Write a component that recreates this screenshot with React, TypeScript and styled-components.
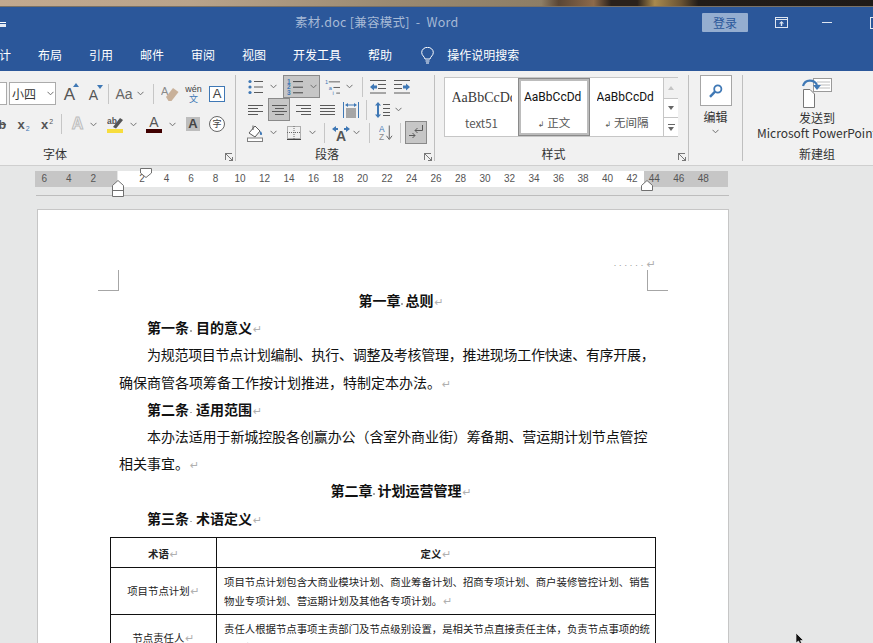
import styled, { createGlobalStyle } from 'styled-components';

const SANS = `"Noto Sans CJK SC", "Liberation Sans", sans-serif`;
const GREY = '#5a5a5a';
const BLUE = '#3f78b5';

const GlobalStyle = createGlobalStyle`
	html, body { margin: 0; padding: 0; background: #e6e7e7; }
	body { font-family: ${SANS}; }
`;

const Chev = ({ m = 0 }: { m?: number }) => (
	<ChevSvg $m={m} width="7" height="5" viewBox="0 0 7 5">
		<polyline points="0.5,0.8 3.5,3.8 6.5,0.8" fill="none" stroke="#707070" />
	</ChevSvg>
);

const HLines = ({ rows, w = 15, h = 14, color = GREY }: { rows: number[][]; w?: number; h?: number; color?: string }) => (
	<svg width={w} height={h} viewBox={`0 0 ${w} ${h}`}>
		{rows.map(([x1, x2, y], i) => (
			<line key={i} x1={x1} x2={x2} y1={y} y2={y} stroke={color} />
		))}
	</svg>
);

const BulletsIcon = () => (
	<svg width="15" height="16" viewBox="0 0 15 16">
		{[2.5, 8, 13.5].map((y) => (
			<g key={y}>
				<circle cx="2" cy={y} r="1.6" fill={BLUE} />
				<line x1="6" x2="15" y1={y} y2={y} stroke={GREY} />
			</g>
		))}
	</svg>
);

const NumberedIcon = () => (
	<svg width="16" height="18" viewBox="0 0 16 18">
		{[1, 2, 3].map((n) => (
			<g key={n}>
				<text x="0" y={n * 5.6} fontSize="6.5" fontWeight="700" fill={BLUE} fontFamily="Liberation Sans">
					{n}
				</text>
				<line x1="6" x2="16" y1={n * 5.6 - 2} y2={n * 5.6 - 2} stroke="#444" />
			</g>
		))}
	</svg>
);

const MultilevelIcon = () => (
	<svg width="16" height="18" viewBox="0 0 16 18">
		<text x="0" y="6" fontSize="6" fill={BLUE} fontFamily="Liberation Sans">1</text>
		<line x1="4" x2="16" y1="3.5" y2="3.5" stroke={GREY} />
		<text x="4" y="12" fontSize="6" fill={BLUE} fontFamily="Liberation Sans">a</text>
		<line x1="9" x2="16" y1="9.5" y2="9.5" stroke={GREY} />
		<text x="8" y="18" fontSize="6" fill={BLUE} fontFamily="Liberation Sans">i</text>
		<line x1="12" x2="16" y1="15.5" y2="15.5" stroke={GREY} />
	</svg>
);

const IndentIcon = ({ flip }: { flip?: boolean }) => (
	<svg width="16" height="14" viewBox="0 0 16 14">
		<g transform={flip ? 'translate(16,0) scale(-1,1)' : undefined}>
			<path d="M0 7 L4 3.5 V5.5 H7 V8.5 H4 V10.5 Z" fill={BLUE} />
			<line x1="0" x2="16" y1="0.5" y2="0.5" stroke={GREY} />
			<line x1="8" x2="16" y1="4.5" y2="4.5" stroke={GREY} />
			<line x1="8" x2="16" y1="8.5" y2="8.5" stroke={GREY} />
			<line x1="0" x2="16" y1="13" y2="13" stroke={GREY} />
		</g>
	</svg>
);

const DistributedIcon = () => (
	<svg width="16" height="16" viewBox="0 0 16 16">
		<line x1="0.5" x2="0.5" y1="0" y2="16" stroke={BLUE} />
		<line x1="15.5" x2="15.5" y1="0" y2="16" stroke={BLUE} />
		<path d="M2 3 L5 1 V2.5 H11 V1 L14 3 L11 5 V3.5 H5 V5 Z" fill={BLUE} />
		{[7, 9, 11, 13, 15].map((y) => (
			<line key={y} x1="3" x2="13" y1={y} y2={y} stroke={GREY} />
		))}
	</svg>
);

const LineSpacingIcon = () => (
	<svg width="15" height="16" viewBox="0 0 15 16">
		<path d="M3 0 L6 3.5 H4 V12.5 H6 L3 16 L0 12.5 H2 V3.5 H0 Z" fill={BLUE} />
		{[2.5, 6.5, 10.5, 13.5].map((y) => (
			<line key={y} x1="8" x2="15" y1={y} y2={y} stroke={GREY} />
		))}
	</svg>
);

const ShadingIcon = () => (
	<svg width="16" height="18" viewBox="0 0 16 18">
		<path d="M2 9 L8 2 L13 7 L8 13 Z" fill="#fff" stroke={GREY} />
		<path d="M6 1.5 V6" stroke={GREY} fill="none" />
		<path d="M13.5 7 C15.5 9 15.5 11 14 11 C12.5 11 12.5 9 13.5 7 Z" fill={BLUE} />
		<rect x="0.5" y="14" width="15" height="3.5" fill="#fff" stroke="#808080" />
	</svg>
);

const BordersIcon = () => (
	<svg width="14" height="14" viewBox="0 0 14 14">
		<g stroke="#6a6a6a" strokeDasharray="1 1" fill="none">
			<rect x="0.5" y="0.5" width="13" height="12" />
			<line x1="7" x2="7" y1="0" y2="13" />
			<line x1="0" x2="14" y1="6.5" y2="6.5" />
		</g>
		<line x1="0" x2="14" y1="13.5" y2="13.5" stroke="#444" />
	</svg>
);

const DirectionIcon = () => (
	<svg width="18" height="16" viewBox="0 0 18 16">
		<path d="M0 4 L4 1 V3 H6 V5 H4 V7 Z M18 4 L14 1 V3 H12 V5 H14 V7 Z" fill={BLUE} />
		<text x="9" y="15.5" textAnchor="middle" fontSize="14" fontWeight="700" fill="#555" fontFamily="Liberation Sans">
			A
		</text>
	</svg>
);

const SortIcon = () => (
	<svg width="15" height="17" viewBox="0 0 15 17">
		<text x="0" y="8" fontSize="9" fill={BLUE} fontFamily="Liberation Sans">A</text>
		<text x="0" y="17" fontSize="9" fill="#8a8a8a" fontFamily="Liberation Sans">Z</text>
		<line x1="11" x2="11" y1="1" y2="15" stroke={GREY} />
		<polyline points="8,12 11,16 14,12" fill="none" stroke={GREY} />
	</svg>
);

const MarksIcon = () => (
	<svg width="16" height="15" viewBox="0 0 16 15">
		<polyline points="14.5,0 14.5,5.5 7,5.5" fill="none" stroke={GREY} />
		<polyline points="9.5,3 7,5.5 9.5,8" fill="none" stroke={GREY} />
		<line x1="1" x2="7" y1="10.5" y2="10.5" stroke={GREY} />
		<polyline points="4.5,8 7,10.5 4.5,13" fill="none" stroke={GREY} />
	</svg>
);

const EraserIcon = () => (
	<svg width="18" height="17" viewBox="0 0 18 17">
		<text x="0" y="10" fontSize="11" fill="#8a8a8a" fontFamily="Liberation Sans">A</text>
		<path d="M5 12 L12 3 L17.5 7 L10.5 16 L7.5 16 Z" fill="#c9b19a" />
	</svg>
);

const PenIcon = () => (
	<svg width="16" height="17" viewBox="0 0 16 17">
		<text x="0" y="8" fontSize="8.5" fontWeight="700" fill="#555" fontFamily="Liberation Sans">ab</text>
		<path d="M6 11 L13 2 L16 4 L9 12.5 Z" fill="#555" />
		<rect x="0" y="13" width="16" height="4" fill="#f7dd3d" />
	</svg>
);

const SearchIcon = () => (
	<svg width="14" height="14" viewBox="0 0 14 14">
		<circle cx="8.8" cy="5" r="3.6" fill="#fff" stroke={BLUE} strokeWidth="1.8" />
		<line x1="6" x2="1" y1="7.6" y2="12.8" stroke={BLUE} strokeWidth="2.4" />
	</svg>
);

const SendIcon = () => (
	<svg width="30" height="30" viewBox="0 0 30 30">
		<rect x="11.5" y="0.5" width="18" height="13" fill="#fff" stroke="#9a9a9a" />
		{[4, 7, 10].map((y) => (
			<line key={y} x1="15" x2="28" y1={y} y2={y} stroke="#bdbdbd" />
		))}
		<path d="M1 8 C3 1 12 1 15 7" fill="none" stroke={BLUE} strokeWidth="2.2" />
		<path d="M11 7 H19 L15 12 Z" fill={BLUE} />
		<path d="M1.5 11.5 H8 L12.5 16 V29.5 H1.5 Z" fill="#fff" stroke="#777" />
	</svg>
);

const RibbonDisplayIcon = () => (
	<svg width="13" height="11" viewBox="0 0 13 11">
		<rect x="0.5" y="0.5" width="12" height="10" fill="none" stroke="#dfe6f1" />
		<line x1="0" x2="13" y1="2.5" y2="2.5" stroke="#dfe6f1" />
		<path d="M6.5 4 L9 6.5 H7.2 V9 H5.8 V6.5 H4 Z" fill="#dfe6f1" />
	</svg>
);

const ChapterTitle = ({ a, b }: { a: string; b: string }) => (
	<Chapter>
		{a}
		<Dot $w={5} />
		{b}
		<Mark>↵</Mark>
	</Chapter>
);

const Article = ({ a, b }: { a: string; b: string }) => (
	<ArticleLine>
		{a}
		<Dot $w={7} />
		{b}
		<Mark>↵</Mark>
	</ArticleLine>
);

const App = () => {
	const white: number[] = [];
	for (let n = 2; n <= 42; n += 2) white.push(n);

	return (
		<Root>
			<GlobalStyle />
			<TopStrip />
			<TitleBar>
				<QatMark />
				<DocTitle>素材.doc [兼容模式]&nbsp; -&nbsp; Word</DocTitle>
				<LoginButton>登录</LoginButton>
				<WinButton $m={27}>
					<RibbonDisplayIcon />
				</WinButton>
				<MinLine />
				<MaxBox />
			</TitleBar>
			<TabBar>
				<Tab $first>设计</Tab>
				<Tab>布局</Tab>
				<Tab>引用</Tab>
				<Tab>邮件</Tab>
				<Tab>审阅</Tab>
				<Tab>视图</Tab>
				<Tab>开发工具</Tab>
				<Tab>帮助</Tab>
				<Bulb width="13" height="17" viewBox="0 0 13 17">
					<path d="M4 12 C3.5 9.5 0.7 8.5 0.7 5.5 A5.8 5.2 0 0 1 12.3 5.5 C12.3 8.5 9.5 9.5 9 12 Z" fill="none" stroke="#fff" />
					<line x1="4.5" x2="8.5" y1="14" y2="14" stroke="#fff" />
					<line x1="5" x2="8" y1="16" y2="16" stroke="#fff" />
				</Bulb>
				<SearchHint>操作说明搜索</SearchHint>
			</TabBar>
			<Ribbon>
				<Group $w={345}>
					<Rows $top={7} $gap={8} $pad={109}>
						<ToolRow $h={23}>
							<FontBox $m={-20} $w={27} />
							<SizeBox>
								小四
								<Chev m={11} />
							</SizeBox>
							<Tool $w={15} $m={8}>
								<BigA $size={17}>A</BigA>
								<Caret $up />
							</Tool>
							<Tool $w={15} $m={9}>
								<BigA $size={14}>A</BigA>
								<Caret />
							</Tool>
							<Sep $m={5} />
							<Tool $w={16} $m={7}>
								<CaseText>Aa</CaseText>
							</Tool>
							<Chev m={5} />
							<Sep $m={9} />
							<Tool $w={18} $m={7}>
								<EraserIcon />
							</Tool>
							<Tool $w={17} $m={6}>
								<WenStack>
									<span>wén</span>
									<b>文</b>
								</WenStack>
							</Tool>
							<Tool $w={16} $m={7}>
								<BoxedA>A</BoxedA>
							</Tool>
						</ToolRow>
						<ToolRow $h={22}>
							<Tool $w={17} $m={-10}>
								<ScriptText $strike>ab</ScriptText>
							</Tool>
							<Tool $w={15} $m={9}>
								<ScriptText>x</ScriptText>
								<ScriptIndex>2</ScriptIndex>
							</Tool>
							<Tool $w={14} $m={9}>
								<ScriptText>x</ScriptText>
								<ScriptIndex $up>2</ScriptIndex>
							</Tool>
							<Sep $m={7} />
							<Tool $w={15} $m={8}>
								<GhostA>A</GhostA>
							</Tool>
							<Chev m={5} />
							<Tool $w={16} $m={10}>
								<PenIcon />
							</Tool>
							<Chev m={7} />
							<Tool $w={16} $m={9}>
								<ColorA>A</ColorA>
							</Tool>
							<Chev m={7} />
							<Tool $w={14} $m={10}>
								<ShadedA>A</ShadedA>
							</Tool>
							<Tool $w={16} $m={9}>
								<CircleChar>字</CircleChar>
							</Tool>
						</ToolRow>
					</Rows>
					<GroupLabel $launcher>字体</GroupLabel>
					<Launcher />
				</Group>
				<Group $w={199}>
					<Rows>
						<ToolRow $h={23}>
							<Tool $w={15} $m={12}>
								<BulletsIcon />
							</Tool>
							<Chev m={7} />
							<Tool $w={37} $m={6} $active>
								<NumberedIcon />
								<Chev m={7} />
							</Tool>
							<Tool $w={15} $m={5}>
								<MultilevelIcon />
							</Tool>
							<Chev m={6} />
							<Sep $m={9} />
							<Tool $w={16} $m={7}>
								<IndentIcon />
							</Tool>
							<Tool $w={16} $m={8}>
								<IndentIcon flip />
							</Tool>
						</ToolRow>
						<ToolRow $h={23}>
							<Tool $w={15} $m={12}>
								<HLines rows={[[0, 15, 2.5], [0, 10, 5.5], [0, 15, 8.5], [0, 10, 11.5]]} />
							</Tool>
							<Tool $w={22} $m={5} $active>
								<HLines rows={[[0, 15, 2.5], [3, 12, 5.5], [0, 15, 8.5], [3, 12, 11.5]]} />
							</Tool>
							<Tool $w={15} $m={6}>
								<HLines rows={[[0, 15, 2.5], [5, 15, 5.5], [0, 15, 8.5], [5, 15, 11.5]]} />
							</Tool>
							<Tool $w={15} $m={9}>
								<HLines rows={[[0, 15, 2.5], [0, 15, 5.5], [0, 15, 8.5], [0, 15, 11.5]]} />
							</Tool>
							<Tool $w={16} $m={8}>
								<DistributedIcon />
							</Tool>
							<Sep $m={7} />
							<Tool $w={15} $m={8}>
								<LineSpacingIcon />
							</Tool>
							<Chev m={5} />
						</ToolRow>
						<ToolRow $h={23}>
							<Tool $w={16} $m={11}>
								<ShadingIcon />
							</Tool>
							<Chev m={7} />
							<Tool $w={14} $m={10}>
								<BordersIcon />
							</Tool>
							<Chev m={8} />
							<Sep $m={8} />
							<Tool $w={18} $m={7}>
								<DirectionIcon />
							</Tool>
							<Chev m={3} />
							<Sep $m={9} />
							<Tool $w={14} $m={9}>
								<SortIcon />
							</Tool>
							<Sep $m={7} />
							<Tool $w={22} $m={4} $active>
								<MarksIcon />
							</Tool>
						</ToolRow>
					</Rows>
					<GroupLabel $launcher>段落</GroupLabel>
					<Launcher />
				</Group>
				<Group $w={254}>
					<Gallery>
						<StyleItem>
							<StyleSample $serif>AaBbCcDd</StyleSample>
							<StyleName>text51</StyleName>
						</StyleItem>
						<StyleItem $selected>
							<StyleSample>AaBbCcDd</StyleSample>
							<StyleName>
								<SmallMark>↲</SmallMark> 正文
							</StyleName>
						</StyleItem>
						<StyleItem>
							<StyleSample>AaBbCcDd</StyleSample>
							<StyleName>
								<SmallMark>↲</SmallMark> 无间隔
							</StyleName>
						</StyleItem>
						<ScrollColumn>
							<ScrollButton $h={21} $off>
								<Caret $up $still />
							</ScrollButton>
							<ScrollButton $h={19}>
								<Caret $still $dark />
							</ScrollButton>
							<ScrollButton $h={18}>
								<MoreLine />
								<Caret $still $dark />
							</ScrollButton>
						</ScrollColumn>
					</Gallery>
					<GroupLabel $launcher>样式</GroupLabel>
					<Launcher />
				</Group>
				<Group $w={54}>
					<EditBox>
						<SearchIcon />
					</EditBox>
					<EditLabel>编辑</EditLabel>
					<EditChev>
						<Chev />
					</EditChev>
				</Group>
				<Group $w={148} $last>
					<SendBlock>
						<SendIcon />
						<SendText>发送到</SendText>
						<SendText>Microsoft PowerPoint</SendText>
					</SendBlock>
					<GroupLabel>新建组</GroupLabel>
				</Group>
			</Ribbon>
			<Workspace>
				<Ruler>
					<RulerMargin $w={82} $shift={-3}>
						{[6, 4, 2].map((n) => (
							<RulerNumber key={n}>{n}</RulerNumber>
						))}
					</RulerMargin>
					<RulerText>
						{white.map((n) => (
							<RulerNumber key={n}>{n}</RulerNumber>
						))}
					</RulerText>
					<RulerMargin $w={84} $shift={-2}>
						{[44, 46, 48].map((n) => (
							<RulerNumber key={n}>{n}</RulerNumber>
						))}
					</RulerMargin>
					<FirstIndent width="12" height="10" viewBox="0 0 12 10">
						<path d="M0.5 0.5 H11.5 V5 L6 9.5 L0.5 5 Z" fill="#fff" stroke="#707070" />
					</FirstIndent>
					<HangIndent width="12" height="17" viewBox="0 0 12 17">
						<path d="M0.5 5.5 L6 0.5 L11.5 5.5 V16.5 H0.5 Z M0.5 10.5 H11.5" fill="#fff" stroke="#707070" />
					</HangIndent>
					<RightIndent width="12" height="11" viewBox="0 0 12 11">
						<path d="M0.5 5.5 L6 0.5 L11.5 5.5 V10.5 H0.5 Z" fill="#fff" stroke="#707070" />
					</RightIndent>
				</Ruler>
				<RulerLine />
				<Page>
					<CropRow>
						<CropMark />
						<HeaderMark>······<Mark>↵</Mark></HeaderMark>
						<CropMark $right />
					</CropRow>
					<Body>
						<ChapterTitle a="第一章" b="总则" />
						<Article a="第一条" b="目的意义" />
						<BodyLine $first $tight={-0.285}>为规范项目节点计划编制、执行、调整及考核管理，推进现场工作快速、有序开展，</BodyLine>
						<BodyLine>确保商管各项筹备工作按计划推进，特制定本办法。<Mark>↵</Mark></BodyLine>
						<Article a="第二条" b="适用范围" />
						<BodyLine $first $tight={-0.1}>本办法适用于新城控股各创赢办公（含室外商业街）筹备期、营运期计划节点管控</BodyLine>
						<BodyLine>相关事宜。<Mark>↵</Mark></BodyLine>
						<ChapterTitle a="第二章" b="计划运营管理" />
						<Article a="第三条" b="术语定义" />
						<TermTable>
							<colgroup>
								<col width="106" />
								<col width="439" />
							</colgroup>
							<tbody>
								<tr>
									<HeadCell>术语<Mark>↵</Mark></HeadCell>
									<HeadCell>定义<Mark>↵</Mark></HeadCell>
								</tr>
								<tr>
									<NameCell>项目节点计划<Mark>↵</Mark></NameCell>
									<TextCell>项目节点计划包含大商业模块计划、商业筹备计划、招商专项计划、商户装修管控计划、销售物业专项计划、营运期计划及其他各专项计划。<Mark>↵</Mark></TextCell>
								</tr>
								<tr>
									<NameCell>节点责任人<Mark>↵</Mark></NameCell>
									<TextCell>责任人根据节点事项主责部门及节点级别设置，是相关节点直接责任主体，负责节点事项的统筹执行与按期销项。<Mark>↵</Mark></TextCell>
								</tr>
							</tbody>
						</TermTable>
					</Body>
				</Page>
				<Pointer width="8" height="12" viewBox="0 0 8 12">
					<path d="M0 0 V10 L2.5 8 L4.5 12 L6 11 L4.5 7.5 H7.5 Z" fill="#111" stroke="#fff" strokeWidth="0.6" />
				</Pointer>
			</Workspace>
		</Root>
	);
};

const Root = styled.div`
	position: relative;
	width: 873px;
	height: 643px;
	overflow: hidden;
	display: flex;
	flex-direction: column;
	background: #e6e7e7;
	font-family: ${SANS};
`;

const TopStrip = styled.div`
	height: 7px;
	flex: none;
	border-bottom: 1px solid #7b7266;
	box-sizing: border-box;
	background: linear-gradient(
		90deg,
		#c2a98f 0,
		#b8a38b 22%,
		#9a8a72 45%,
		#8d7e66 62%,
		#5a4635 64%,
		#8d6a4a 68%,
		#2a211b 70%,
		#2a211b 73%,
		#a98a4e 75%,
		#6b5434 78%,
		#221c18 80%,
		#1f1a17 100%
	);
`;

const TitleBar = styled.div`
	height: 34px;
	flex: none;
	display: flex;
	align-items: center;
	background: #2b579a;
`;

const QatMark = styled.span`
	width: 6px;
	height: 5px;
	flex: none;
	border-top: 1px solid #fff;
	border-bottom: 3px solid #e5ebf4;
	box-sizing: border-box;
`;

const DocTitle = styled.div`
	margin-left: 289px;
	margin-top: -5px;
	width: 162px;
	flex: none;
	white-space: nowrap;
	font-size: 12.5px;
	letter-spacing: 0.25px;
	color: #a7bad6;
`;

const LoginButton = styled.div`
	margin-left: 245px;
	width: 46px;
	height: 19px;
	margin-top: -3px;
	flex: none;
	border-radius: 1px;
	background: #95aed0;
	color: #2b579a;
	font-size: 12px;
	line-height: 19px;
	text-align: center;
`;

const WinButton = styled.span<{ $m: number }>`
	margin-left: ${(p) => p.$m}px;
	margin-top: -3px;
	flex: none;
	display: flex;
`;

const MinLine = styled.span`
	margin-left: 34px;
	width: 10px;
	height: 1px;
	margin-top: -3px;
	flex: none;
	background: #dfe6f1;
`;

const MaxBox = styled.span`
	margin-left: 38px;
	width: 10px;
	height: 10px;
	margin-top: -3px;
	flex: none;
	border: 1px solid #dfe6f1;
`;

const TabBar = styled.div`
	height: 30px;
	flex: none;
	box-sizing: border-box;
	padding-bottom: 3px;
	display: flex;
	align-items: center;
	background: #2b579a;
	color: #fff;
	font-size: 12px;
`;

const Tab = styled.span<{ $first?: boolean }>`
	flex: none;
	margin-left: ${(p) => (p.$first ? -13 : 27)}px;
	white-space: nowrap;
`;

const Bulb = styled.svg`
	margin-left: 29px;
	margin-top: 1px;
	flex: none;
`;

const SearchHint = styled.span`
	margin-left: 13px;
	flex: none;
`;

const Ribbon = styled.div`
	height: 95px;
	flex: none;
	box-sizing: border-box;
	display: flex;
	margin-left: -109px;
	padding: 4px 0 4px;
	background: #f1f1f1;
	border-bottom: 1px solid #cfcfcf;
`;

const Group = styled.div<{ $w: number; $last?: boolean }>`
	position: relative;
	width: ${(p) => p.$w}px;
	flex: none;
	box-sizing: border-box;
	display: flex;
	flex-direction: column;
	border-right: ${(p) => (p.$last ? 'none' : '1px solid #bfbfbf')};
`;

const Rows = styled.div<{ $top?: number; $gap?: number; $pad?: number }>`
	display: flex;
	flex-direction: column;
	padding-top: ${(p) => p.$top ?? 0}px;
	padding-left: ${(p) => p.$pad ?? 0}px;
	gap: ${(p) => p.$gap ?? 0}px;
`;

const ToolRow = styled.div<{ $h: number }>`
	display: flex;
	align-items: center;
	height: ${(p) => p.$h}px;
`;

const Tool = styled.span<{ $w: number; $m: number; $active?: boolean }>`
	position: relative;
	flex: none;
	width: ${(p) => p.$w}px;
	margin-left: ${(p) => p.$m}px;
	height: ${(p) => (p.$active ? '100%' : 'auto')};
	box-sizing: border-box;
	display: inline-flex;
	align-items: center;
	justify-content: center;
	background: ${(p) => (p.$active ? '#c6c6c6' : 'transparent')};
	border: ${(p) => (p.$active ? '1px solid #8a8a8a' : 'none')};
`;

const ChevSvg = styled.svg<{ $m: number }>`
	flex: none;
	margin-left: ${(p) => p.$m}px;
`;

const Sep = styled.span<{ $m: number }>`
	flex: none;
	width: 1px;
	height: 20px;
	margin-left: ${(p) => p.$m}px;
	background: #c6c6c6;
`;

const FontBox = styled.span<{ $m: number; $w: number }>`
	flex: none;
	height: 23px;
	box-sizing: border-box;
	margin-left: ${(p) => p.$m}px;
	width: ${(p) => p.$w}px;
	background: #fff;
	border: 1px solid #ababab;
`;

const SizeBox = styled.span`
	flex: none;
	height: 23px;
	width: 47px;
	margin-left: 2px;
	box-sizing: border-box;
	display: flex;
	align-items: center;
	padding-left: 2px;
	background: #fff;
	border: 1px solid #ababab;
	font-size: 12px;
	color: #333;
`;

const BigA = styled.span<{ $size: number }>`
	font: ${(p) => p.$size}px "Liberation Sans", sans-serif;
	color: #555;
	margin-right: 4px;
	margin-top: 3px;
`;

const Caret = styled.span<{ $up?: boolean; $still?: boolean; $dark?: boolean }>`
	position: ${(p) => (p.$still ? 'static' : 'absolute')};
	right: 0;
	top: 1px;
	width: 0;
	height: 0;
	border-left: 3.5px solid transparent;
	border-right: 3.5px solid transparent;
	${(p) =>
		p.$up
			? `border-bottom: 4px solid ${p.$still ? '#c4c4c4' : BLUE};`
			: `border-top: 4px solid ${p.$dark ? '#666' : BLUE};`}
`;

const CaseText = styled.span`
	font: 14px "Liberation Sans", sans-serif;
	color: #666;
`;

const WenStack = styled.span`
	display: flex;
	flex-direction: column;
	align-items: center;
	line-height: 9px;
	font: 9px/9px "Liberation Sans", sans-serif;
	color: #444;

	b {
		font: 400 9px/9px ${SANS};
		color: ${BLUE};
	}
`;

const BoxedA = styled.span`
	width: 16px;
	height: 16px;
	box-sizing: border-box;
	border: 1px solid ${BLUE};
	background: #fff;
	color: #444;
	font: 13px/14px "Liberation Sans", sans-serif;
	text-align: center;
`;

const ScriptText = styled.span<{ $strike?: boolean }>`
	font: 700 13px "Liberation Sans", sans-serif;
	color: #555;
	text-decoration: ${(p) => (p.$strike ? 'line-through' : 'none')};
	white-space: nowrap;
`;

const ScriptIndex = styled.sub<{ $up?: boolean }>`
	font: 7px "Liberation Sans", sans-serif;
	color: ${(p) => (p.$up ? '#555' : BLUE)};
	vertical-align: baseline;
	margin-top: ${(p) => (p.$up ? -6 : 8)}px;
	margin-left: 1px;
`;

const GhostA = styled.span`
	font: 700 16px "Liberation Sans", sans-serif;
	color: #f1f1f1;
	-webkit-text-stroke: 1px #bdbdbd;
`;

const ColorA = styled.span`
	width: 16px;
	box-sizing: border-box;
	border-bottom: 4px solid #400000;
	text-align: center;
	font: 14px/13px "Liberation Sans", sans-serif;
	color: #555;
`;

const ShadedA = styled.span`
	width: 14px;
	height: 14px;
	background: #bdbdbd;
	text-align: center;
	font: 700 13px/14px "Liberation Sans", sans-serif;
	color: #444;
`;

const CircleChar = styled.span`
	width: 16px;
	height: 16px;
	box-sizing: border-box;
	border: 1px solid #666;
	border-radius: 50%;
	background: #fff;
	text-align: center;
	font-size: 9px;
	line-height: 14px;
	color: #444;
`;

const GroupLabel = styled.div<{ $launcher?: boolean }>`
	margin-top: auto;
	height: 14px;
	line-height: 14px;
	text-align: center;
	font-size: 12px;
	color: #333;
	padding-right: ${(p) => (p.$launcher ? 16 : 0)}px;
`;

const Launcher = styled.span`
	position: absolute;
	right: 3px;
	bottom: 1px;
	width: 7px;
	height: 7px;
	box-sizing: border-box;
	border-left: 1px solid #777;
	border-top: 1px solid #777;
	background: linear-gradient(45deg, transparent 44%, #777 44%, #777 56%, transparent 56%);

	&::after {
		content: '';
		position: absolute;
		right: -1px;
		bottom: -1px;
		width: 3px;
		height: 3px;
		border-right: 1px solid #777;
		border-bottom: 1px solid #777;
	}
`;

const Gallery = styled.div`
	display: flex;
	margin: 2px 0 0 9px;
	width: 234px;
	height: 60px;
	box-sizing: border-box;
	background: #fff;
	border: 1px solid #c6c6c6;
`;

const StyleItem = styled.div<{ $selected?: boolean }>`
	width: ${(p) => (p.$selected ? 72 : 73)}px;
	flex: none;
	box-sizing: border-box;
	overflow: hidden;
	display: flex;
	flex-direction: column;
	align-items: center;
	padding-top: ${(p) => (p.$selected ? 8 : 11)}px;
	${(p) => p.$selected && `
		border: 3px solid #bcbcbc;
		outline: 1px solid #8a8a8a;
		outline-offset: -1px;
	`}
`;

const StyleSample = styled.div<{ $serif?: boolean }>`
	width: 60px;
	overflow: hidden;
	white-space: nowrap;
	font: ${(p) => (p.$serif ? '14px "Liberation Serif", serif' : '12px Roboto, sans-serif')};
	color: ${(p) => (p.$serif ? '#3a3a3a' : '#111')};
	line-height: 16px;
	height: 16px;
	margin-top: ${(p) => (p.$serif ? 1 : 0)}px;
`;

const StyleName = styled.div`
	margin-top: 9px;
	font-size: 11.5px;
	line-height: 16px;
	color: #555;
	white-space: nowrap;
`;

const SmallMark = styled.span`
	font-family: "DejaVu Sans", sans-serif;
	font-size: 8px;
`;

const ScrollColumn = styled.div`
	width: 14px;
	flex: none;
	display: flex;
	flex-direction: column;
	border-left: 1px solid #c6c6c6;
`;

const ScrollButton = styled.div<{ $h: number; $off?: boolean }>`
	height: ${(p) => p.$h}px;
	box-sizing: border-box;
	display: flex;
	flex-direction: column;
	gap: 2px;
	align-items: center;
	justify-content: center;
	background: ${(p) => (p.$off ? '#f1f1f1' : '#fff')};
	border-bottom: 1px solid #c6c6c6;

	&:last-child {
		border-bottom: none;
	}
`;

const MoreLine = styled.span`
	width: 7px;
	height: 1px;
	background: #666;
`;

const EditBox = styled.div`
	margin: 0 0 0 11px;
	width: 32px;
	height: 31px;
	box-sizing: border-box;
	display: flex;
	align-items: center;
	justify-content: center;
	background: #fff;
	border: 1px solid #a6a6a6;
`;

const EditLabel = styled.div`
	margin-top: 2px;
	text-align: center;
	font-size: 12px;
	line-height: 17px;
	color: #333;
`;

const EditChev = styled.div`
	display: flex;
	justify-content: center;
	margin-top: 4px;
`;

const SendBlock = styled.div`
	display: flex;
	flex-direction: column;
	align-items: center;
	padding-top: 3px;
`;

const SendText = styled.div`
	font-size: 12px;
	line-height: 15px;
	color: #333;
	white-space: nowrap;

	svg + & {
		margin-top: 2px;
	}
`;

const Workspace = styled.div`
	position: relative;
	flex: 1;
	min-height: 0;
	display: flex;
	flex-direction: column;
	background: #e6e7e7;
`;

const Ruler = styled.div`
	position: relative;
	display: flex;
	flex: none;
	width: 694px;
	height: 16px;
	margin: 5px 0 0 35px;
`;

const RulerMargin = styled.div<{ $w: number; $shift: number }>`
	width: ${(p) => p.$w}px;
	flex: none;
	display: flex;
	padding-left: 0;
	background: #c6c6c6;

	& > :first-child {
		margin-left: ${(p) => p.$shift}px;
	}
`;

const RulerText = styled.div`
	width: 526px;
	margin-left: 1px;
	flex: none;
	display: flex;
	padding-left: 11.75px;
	box-sizing: border-box;
	background: #fff;
`;

const RulerNumber = styled.span`
	width: 24.5px;
	flex: none;
	text-align: center;
	font: 10px/16px "Liberation Sans", sans-serif;
	color: #555;
`;

const FirstIndent = styled.svg`
	position: absolute;
	left: 105px;
	top: -3px;
`;

const HangIndent = styled.svg`
	position: absolute;
	left: 77px;
	top: 9px;
`;

const RightIndent = styled.svg`
	position: absolute;
	left: 606px;
	top: 9px;
`;

const RulerLine = styled.div`
	flex: none;
	width: 693px;
	height: 1px;
	margin: 8px 0 0 36px;
	background: #bdbdbd;
`;

const Page = styled.div`
	flex: 1;
	width: 692px;
	margin: 13px 0 0 37px;
	box-sizing: border-box;
	padding: 60px 60px 0;
	background: #fff;
	border: 1px solid #c6c6c6;
	border-bottom: none;
`;

const CropRow = styled.div`
	position: relative;
	display: flex;
	justify-content: space-between;
	height: 21px;
`;

const CropMark = styled.span<{ $right?: boolean }>`
	width: 21px;
	height: 21px;
	box-sizing: border-box;
	border-bottom: 1px solid #a6a6a6;
	${(p) => (p.$right ? 'border-left' : 'border-right')}: 1px solid #a6a6a6;
`;

const HeaderMark = styled.span`
	position: absolute;
	right: 12px;
	top: -11px;
	font: 9px/12px "Liberation Sans", sans-serif;
	color: #999;
	letter-spacing: 2.4px;
`;

const Body = styled.div`
	margin-top: -4px;
	padding: 0 21px;
	font-size: 14px;
	line-height: 27.2px;
	color: #111;
`;

const Chapter = styled.div`
	padding-left: 36px;
	text-align: center;
	font-weight: 700;
	white-space: nowrap;
	height: 27.2px;
`;

const ArticleLine = styled.div`
	padding-left: 28px;
	font-weight: 700;
	white-space: nowrap;
	height: 27.2px;
`;

const BodyLine = styled.div<{ $first?: boolean; $tight?: number }>`
	padding-left: ${(p) => (p.$first ? 28 : 0)}px;
	letter-spacing: ${(p) => p.$tight ?? 0}px;
	white-space: nowrap;
	height: 27.2px;
`;

const Dot = styled.span<{ $w: number }>`
	display: inline-block;
	position: relative;
	width: ${(p) => p.$w}px;

	&::after {
		content: '';
		position: absolute;
		left: 1px;
		top: -3px;
		width: 1.5px;
		height: 1.5px;
		background: #aaa;
	}
`;

const Mark = styled.span`
	font-family: "DejaVu Sans", sans-serif;
	font-weight: 400;
	font-size: 11px;
	color: #b0b0b0;
	letter-spacing: 0;
	margin-left: 1px;
`;

const TermTable = styled.table`
	margin: 5px 0 0 -9px;
	width: 545px;
	table-layout: fixed;
	border-collapse: collapse;
	font-size: 10.4px;
	line-height: 19px;
	color: #222;
`;

const HeadCell = styled.td`
	box-sizing: border-box;
	height: 30px;
	padding: 3px 0 0;
	border: 1px solid #111;
	text-align: center;
	font-weight: 700;
`;

const NameCell = styled.td`
	padding: 0;
	border: 1px solid #111;
	text-align: center;
`;

const TextCell = styled.td`
	padding: 4px 4px 3px 7px;
	border: 1px solid #111;
`;

const Pointer = styled.svg`
	position: absolute;
	left: 796px;
	top: 467px;
`;

export default App;
